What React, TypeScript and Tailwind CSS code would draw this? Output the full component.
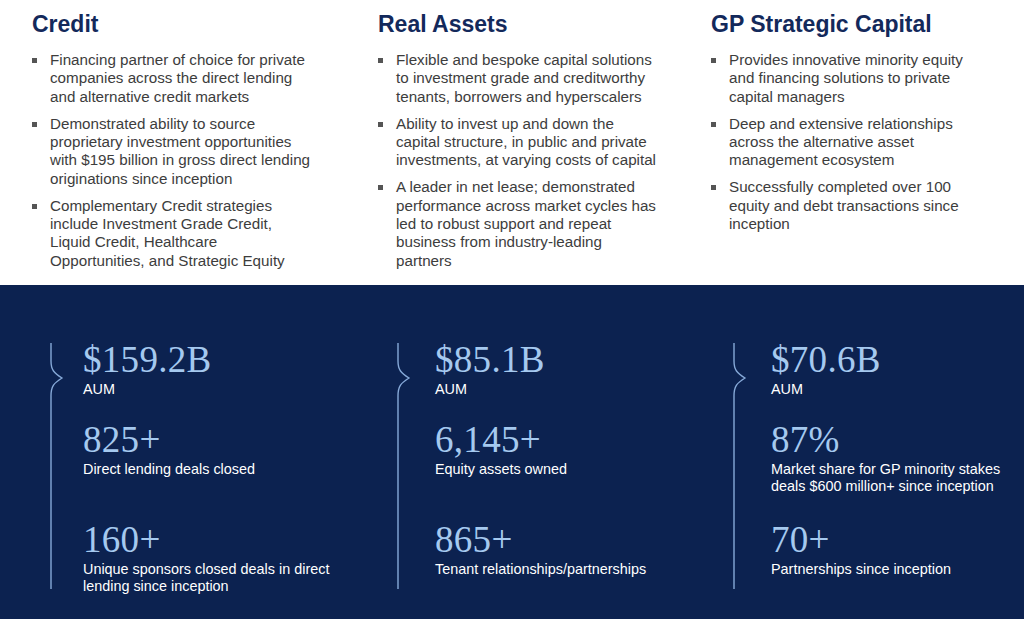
const segments = [
  {
    title: "Credit",
    width: "w-[346px]",
    textWidth: "w-[265px]",
    bullets: [
      "Financing partner of choice for private companies across the direct lending and alternative credit markets",
      "Demonstrated ability to source proprietary investment opportunities with $195 billion in gross direct lending originations since inception",
      "Complementary Credit strategies include Investment Grade Credit, Liquid Credit, Healthcare Opportunities, and Strategic Equity",
    ],
  },
  {
    title: "Real Assets",
    width: "w-[333px]",
    textWidth: "w-[265px]",
    bullets: [
      "Flexible and bespoke capital solutions to investment grade and creditworthy tenants, borrowers and hyperscalers",
      "Ability to invest up and down the capital structure, in public and private investments, at varying costs of capital",
      "A leader in net lease; demonstrated performance across market cycles has led to robust support and repeat business from industry-leading partners",
    ],
  },
  {
    title: "GP Strategic Capital",
    width: "flex-1",
    textWidth: "w-[252px]",
    bullets: [
      "Provides innovative minority equity and financing solutions to private capital managers",
      "Deep and extensive relationships across the alternative asset management ecosystem",
      "Successfully completed over 100 equity and debt transactions since inception",
    ],
  },
]

const stats = [
  {
    width: "w-[347px] shrink-0",
    offset: "pl-[33px]",
    items: [
      { value: "$159.2B", label: "AUM" },
      { value: "825+", label: "Direct lending deals closed" },
      { value: "160+", label: "Unique sponsors closed deals in direct lending since inception" },
    ],
  },
  {
    width: "w-[336px] shrink-0",
    offset: "pl-[38px]",
    items: [
      { value: "$85.1B", label: "AUM" },
      { value: "6,145+", label: "Equity assets owned" },
      { value: "865+", label: "Tenant relationships/partnerships" },
    ],
  },
  {
    width: "flex-1 min-w-0",
    offset: "pl-[38px]",
    items: [
      { value: "$70.6B", label: "AUM" },
      { value: "87%", label: "Market share for GP minority stakes deals $600 million+ since inception" },
      { value: "70+", label: "Partnerships since inception" },
    ],
  },
]

function Brace() {
  return (
    <svg width="14" height="246" viewBox="0 0 14 246" className="shrink-0 mt-[1px]" fill="none">
      <path
        d="M1 0 V18 C1 27 4 30 12 35 C4 40 1 43 1 53 V246"
        stroke="#86a9d8"
        strokeWidth="1.4"
      />
    </svg>
  )
}

function Stat({ value, label }: { value: string; label: string }) {
  return (
    <div>
      <div className="text-[37px] leading-[36px] text-[#a5c9ef] font-['Liberation_Serif',serif] tracking-[0.3px]">
        {value}
      </div>
      <div className="mt-[2.5px] w-[250px] text-[14.4px] leading-[17.7px] text-white">{label}</div>
    </div>
  )
}

export default function App() {
  return (
    <div className="w-[1024px] h-[619px] overflow-hidden bg-white font-['Liberation_Sans',Arial,sans-serif] flex flex-col">
      <div className="h-[285px] shrink-0 flex pl-[32px] pt-[13px]">
        {segments.map((seg) => (
          <div key={seg.title} className={seg.width}>
            <h2 className="text-[23px] leading-[23px] font-bold text-[#13295b]">{seg.title}</h2>
            <ul className="mt-[15px] flex flex-col gap-[8.8px]">
              {seg.bullets.map((b) => (
                <li key={b} className="flex text-[15.2px] leading-[18.3px] text-[#3d3d3d]">
                  <span className="w-[5px] h-[5px] bg-[#555] mt-[7px] mr-[13px] shrink-0" />
                  <span className={seg.textWidth}>{b}</span>
                </li>
              ))}
            </ul>
          </div>
        ))}
      </div>
      <div className="flex-1 bg-[#0c2250] flex pl-[50px] pt-[57px]">
        {stats.map((col, i) => (
          <div key={i} className={`${col.width} flex`}>
            <Brace />
            <div className={`${col.offset} grid grid-rows-[80px_100px_auto] -ml-[14px]`}>
              {col.items.map((it) => (
                <Stat key={it.value} value={it.value} label={it.label} />
              ))}
            </div>
          </div>
        ))}
      </div>
    </div>
  )
}
